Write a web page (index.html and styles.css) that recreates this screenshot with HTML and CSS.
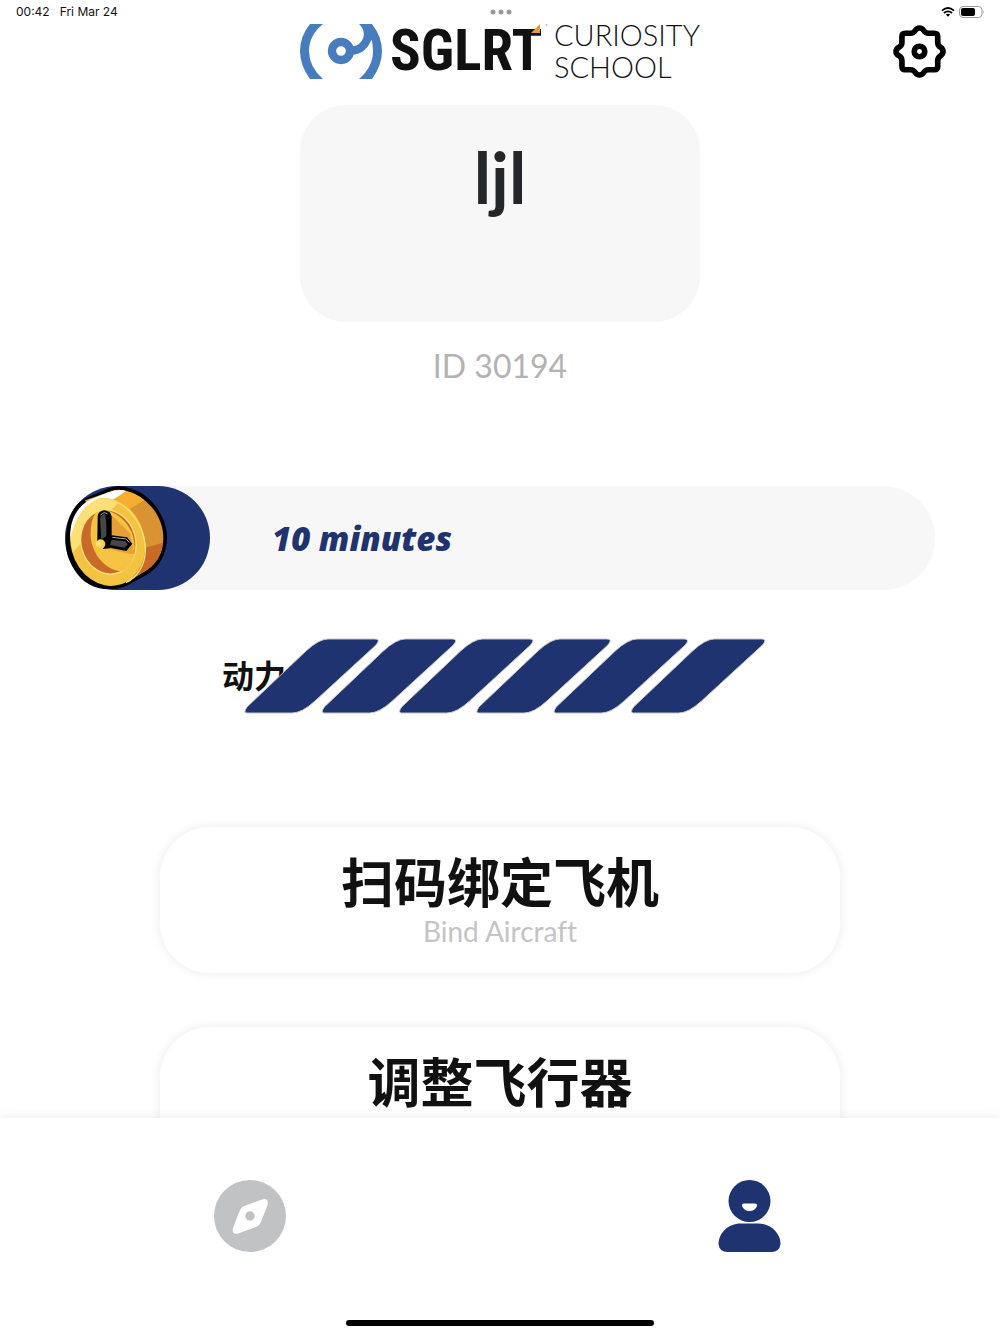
FILE: index.html
```html
<!DOCTYPE html>
<html lang="zh-CN">
<head>
<meta charset="utf-8">
<meta name="viewport" content="width=device-width, initial-scale=1">
<title>SGLRT Curiosity School</title>
<link rel="stylesheet" href="styles.css">
</head>
<body>
<div class="status">
  <div class="status-time"><span>00:42</span><span>Fri Mar 24</span></div>
  <svg class="status-dots" viewBox="0 0 22 6" aria-hidden="true"><circle cx="3" cy="3" r="2.5"/><circle cx="11" cy="3" r="2.5"/><circle cx="19" cy="3" r="2.5"/></svg>
  <div class="status-icons">
    <svg class="wifi" viewBox="0 0 14 10" aria-hidden="true"><path d="M1 3.6Q7-1.6 13 3.6M3 6Q7 2.6 11 6" fill="none" stroke="#000" stroke-width="1.7"/><path d="M4.8 7.6Q7 5.8 9.2 7.6L7 9.8Z"/></svg>
    <svg class="battery" viewBox="0 0 26 12" aria-hidden="true"><rect x=".5" y=".5" width="22.5" height="11" rx="3.5" fill="none" stroke="#999"/><rect x="2" y="2" width="14" height="8" rx="2"/><path d="M24.3 4Q25.8 6 24.3 8Z" fill="#999"/></svg>
  </div>
</div>

<header class="header">
  <div class="logo">
    <svg class="logo-mark" viewBox="30 71 246 165" aria-hidden="true">
      <path d="M60 71H99Q57 105 57 152T99 236H60Q30 196 30 152T60 71Z"/>
      <path d="M207 71H246Q276 110 276 152T246 236H207Q249 200 249 152Q249 134 245 118Q226 160 191 163L188 138Q212 134 220 112Q226 88 207 71Z"/>
      <circle cx="153" cy="152" r="27" fill="none" stroke="#477dbf" stroke-width="25"/>
    </svg>
    <div class="wordmark">SGLRT
      <svg class="wordmark-corner" viewBox="0 0 17 9" aria-hidden="true"><path d="M9 0V9H0Z" fill="#e09b3d"/><circle cx="15.5" cy="1" r="1" fill="#bbb"/></svg>
    </div>
    <div class="tagline"><span>CURIOSITY</span><span>SCHOOL</span></div>
  </div>
  <button class="settings" type="button" aria-label="Settings">
    <svg viewBox="39 72 160 160" aria-hidden="true">
      <path d="M119 81Q127 81 132 89Q137 97 147 97H164Q174 97 174 107V124Q174 134 182 139Q190 144 190 152Q190 160 182 165Q174 170 174 180V197Q174 207 164 207H147Q137 207 132 215Q127 223 119 223Q111 223 106 215Q101 207 91 207H76Q66 207 66 197V180Q66 170 57 165Q48 160 48 152Q48 144 57 139Q66 134 66 124V107Q66 97 76 97H91Q101 97 106 89Q111 81 119 81Z"/>
      <circle cx="119" cy="152" r="16"/>
    </svg>
  </button>
</header>

<main class="content">
  <section class="profile">
    <h1 class="profile-name">ljl</h1>
  </section>
  <p class="profile-id">ID 30194</p>

  <div class="time-bar">
    <div class="time-fill">
      <svg class="clock" viewBox="30 33 306 312" aria-hidden="true">
        <path d="M155 42Q185 27 225 40C290 58 336 125 336 188C336 235 312 280 270 302L215 332C150 358 90 335 60 287C35 250 29 215 34 175C40 115 62 82 100 66Z" fill="#000"/>
        <path d="M160 52Q188 38 220 50C285 70 325 130 325 188C325 230 305 268 265 292L215 322L90 76Z" fill="#d99333"/>
        <path d="M100 76L160 52Q188 40 215 48L160 84L125 78Z" fill="#fff"/>
        <path d="M160 84L215 48Q245 55 268 76L205 112Z" fill="#f5ae2e"/>
        <path d="M265 220L324 203C320 240 305 268 265 292L225 315Z" fill="#c96a28"/>
        <ellipse cx="158" cy="201" rx="111" ry="133" transform="rotate(-15 158 201)" fill="#f5c342"/>
        <path d="M55 232C38 185 48 135 75 100Q100 70 140 71Q165 72 188 84L60 225Z" fill="#fbe078"/>
        <path d="M47 190C42 140 65 95 105 74L128 72C88 88 58 130 47 190Z" fill="#fff"/>
        <path d="M145 71C215 75 265 145 271 213C274 265 250 305 213 323" fill="none" stroke="#fbe078" stroke-width="4"/>
        <ellipse cx="160" cy="201" rx="82" ry="97" transform="rotate(-15 160 201)" fill="#c96a28" stroke="#fbe078" stroke-width="4"/>
        <path d="M123 113C165 92 216 132 233 180C248 235 232 275 200 289C150 285 112 238 107 185Q105 135 123 113Z" fill="#f5c342"/>
        <path d="M172 122L225 175L239 238L215 235L150 220Z" fill="#e6a136"/>
        <path d="M128 123Q130 108 149 106Q168 109 170 125V181L216 187L232 206L214 228L168 219L145 222L127 198Z" fill="#000"/>
        <path d="M135 133Q137 119 149 117Q155 125 154 184L139 193Z" fill="#474749"/>
        <path d="M170 194L211 199L218 209L208 218L165 210Z" fill="#474749"/>
        <path d="M137 120Q147 108 158 117M172 187L214 192L222 202" fill="none" stroke="#aaa" stroke-width="3"/>
        <circle cx="137" cy="207" r="14" fill="#f8cf4b"/><circle cx="131" cy="207" r="9" fill="#fbe078"/>
      </svg>
    </div>
    <span class="time-text">10 minutes</span>
  </div>

  <div class="power">
    <span class="power-label">动力</span>
    <svg class="power-meter" viewBox="0 0 522 76" role="img" aria-label="6 / 6">
      <defs><path id="cell" d="M84 1H131Q137 1 132 7L71 63Q58 75 48 75H3Q-1 75 3 69L62 13Q75 1 84 1Z"/></defs>
      <use href="#cell"/><use href="#cell" x="77.3"/><use href="#cell" x="154.6"/><use href="#cell" x="231.9"/><use href="#cell" x="309.2"/><use href="#cell" x="386.5"/>
    </svg>
  </div>

  <div class="actions">
    <button class="action" type="button"><span class="action-title">扫码绑定飞机</span><span class="action-sub">Bind Aircraft</span></button>
    <button class="action" type="button"><span class="action-title">调整飞行器</span></button>
  </div>
</main>

<nav class="tabs">
  <div class="tab-row">
    <a class="tab" href="#explore" aria-label="Explore">
      <svg viewBox="0 0 72 72" aria-hidden="true"><circle cx="36" cy="36" r="36" fill="#c1c2c4"/><path d="M30 26L48 19.500Q55 17.500 53.500 25L47 42Q45.500 45.500 42 47L24 53.500Q17.500 55 19 48L26 30Q27.500 27 30 26Z" fill="#fff"/><circle cx="36" cy="36" r="4.700" fill="#c1c2c4"/></svg>
    </a>
    <a class="tab" href="#profile" aria-label="Profile" aria-current="page">
      <svg viewBox="0 0 72 72" aria-hidden="true"><circle cx="35.500" cy="21" r="21" fill="#1e3370"/><path d="M30 23.500H41Q43.500 23.500 43 26Q41 31 35.500 31T28 26Q27.500 23.500 30 23.500Z" fill="#fff"/><path d="M26.500 43.500H44.500C56.500 43.500 66.500 53 66.500 64Q65.500 72 57.500 72H13.500Q5.500 72 4.500 64C4.500 53 14.500 43.500 26.500 43.500Z" fill="#1e3370"/></svg>
    </a>
  </div>
  <div class="home-indicator"></div>
</nav>
</body>
</html>
```
FILE: styles.css
```css
* { box-sizing: border-box; }

body {
  margin: 0;
  height: 100vh;
  display: flex;
  flex-direction: column;
  background: #fff;
  color: #111;
  font-family: Lato, "Noto Sans CJK SC", sans-serif;
  font-variant-ligatures: none;
}

button {
  border: 0;
  padding: 0;
  background: none;
  color: inherit;
  font: inherit;
  cursor: pointer;
}

svg { display: block; }

.status {
  display: grid;
  grid-template-columns: 1fr auto 1fr;
  align-items: center;
  height: 24px;
  padding: 0 15px 0 16px;
  font: 400 12px/24px Inter, sans-serif;
}
.status-time { display: flex; gap: 10px; }
.status-dots { width: 22px; height: 6px; fill: #999; }
.status-icons { display: flex; justify-content: flex-end; align-items: center; gap: 4px; }
.wifi { width: 14px; height: 10px; }
.battery { width: 26px; height: 12px; }

.header {
  display: grid;
  grid-template-columns: 1fr 400px 1fr;
  align-items: center;
  padding: 0 54px;
}
.logo {
  grid-column: 2;
  display: flex;
  align-items: center;
  height: 54px;
}
.logo-mark { flex: none; width: 82px; height: 55px; fill: #477dbf; }
.wordmark {
  flex: none;
  position: relative;
  width: 166px;
  padding-left: 8px;
  font: 700 57px/54px "Roboto Condensed", "Liberation Sans Narrow", "Liberation Sans", sans-serif;
  white-space: nowrap;
}
.wordmark-corner { position: absolute; top: 0; right: 0; width: 17px; height: 9px; }
.tagline {
  display: flex;
  flex-direction: column;
  padding-left: 6px;
  font-size: 29px;
  font-weight: 300;
  line-height: 32px;
}
.settings { justify-self: end; }
.settings svg { width: 53px; height: 53px; fill: none; stroke: #000; stroke-width: 17; }

.content {
  flex: 1;
  min-height: 0;
  overflow-y: auto;
  scrollbar-width: none;
  display: flex;
  flex-direction: column;
  align-items: center;
  padding-top: 27px;
}
.content > * { flex-shrink: 0; }

.profile {
  width: 40%;
  min-height: 217px;
  padding-top: 36px;
  border-radius: 46px;
  background: #f7f7f7;
  text-align: center;
}
.profile-name {
  margin: 0;
  color: #25262a;
  font-size: 70px;
  font-weight: 700;
  line-height: 72px;
}
.profile-id {
  margin: 24px 0 0;
  color: #b3b3b3;
  font-size: 32px;
  line-height: 40px;
}

.time-bar {
  display: flex;
  align-items: center;
  gap: 62px;
  width: 87%;
  margin-top: 100px;
  border-radius: 52px;
  background: #f7f7f7;
}
.time-fill { width: 145px; border-radius: 52px; background: #1e3370; }
.clock { width: 102px; height: 104px; }
.time-text {
  color: #1e3370;
  font-family: "Open Sans", sans-serif;
  font-size: 33px;
  font-style: italic;
  font-weight: 800;
}

.power {
  display: flex;
  align-items: center;
  margin-top: 48px;
  padding-right: 12px;
}
.power-label { font-size: 32px; font-weight: 700; line-height: 48px; }
.power-meter {
  width: 522px;
  height: 76px;
  margin-left: -42px;
  fill: #1e3370;
  stroke: #c4c4c4;
  stroke-width: 1;
}

.actions {
  display: flex;
  flex-direction: column;
  gap: 54px;
  width: 68%;
  margin-top: 113px;
  padding-bottom: 54px;
}
.action {
  display: flex;
  flex-direction: column;
  align-items: center;
  min-height: 146px;
  padding: 24px 0;
  border-radius: 50px;
  background: #fff;
  box-shadow: 0 0 12px rgba(0, 0, 0, 0.08);
}
.action-title { font-size: 53px; font-weight: 700; line-height: 64px; }
.action-sub { color: #c4c4c4; font-size: 28px; line-height: 32px; }

.tabs {
  position: relative;
  display: flex;
  flex-direction: column;
  align-items: center;
  padding: 62px 0 8px;
  background: #fff;
  box-shadow: 0 0 12px rgba(0, 0, 0, 0.08);
}
.tab-row { display: flex; width: 100%; }
.tab { flex: 1; display: flex; justify-content: center; }
.tab svg { width: 72px; height: 72px; overflow: visible; }
.home-indicator {
  width: 308px;
  height: 6px;
  margin-top: 68px;
  border-radius: 3px;
  background: #000;
}
```
